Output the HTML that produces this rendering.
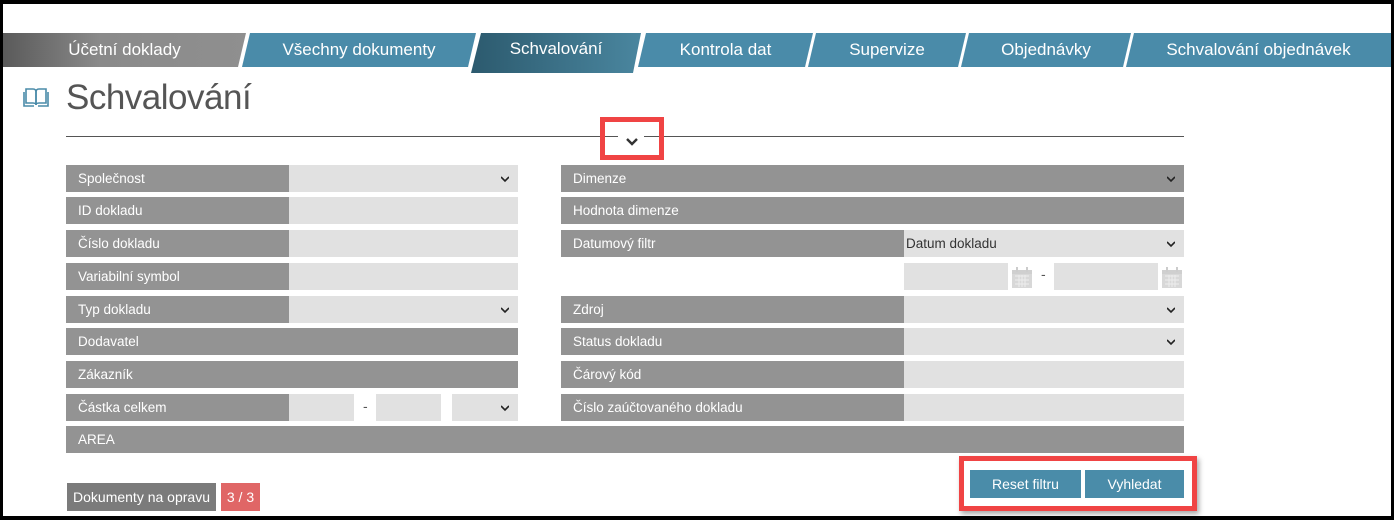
<!DOCTYPE html>
<html><head><meta charset="utf-8"><style>
*{margin:0;padding:0;box-sizing:border-box}
html,body{width:1394px;height:520px;overflow:hidden;background:#000}
#pg{position:absolute;left:3px;top:4px;width:1388px;height:512px;background:#fff}
.a{position:absolute}
body{font-family:"Liberation Sans",sans-serif}
.tab{position:absolute;top:33px;height:34px;color:#fff;font-size:17px;line-height:34px;text-align:center;background:#4a8ba9;box-shadow:0 2px 3px rgba(0,0,0,.2)}
.l{position:absolute;height:27px;background:#939393;color:#fff;font-size:13.5px;line-height:27px;padding-left:12px}
.i{position:absolute;height:27px;background:#e1e1e1;font-size:13.5px;line-height:27px;padding-left:2px;color:#333}
.ch{position:absolute;right:9px;top:10px;width:8px;height:8px}
.cal{position:absolute;width:20px;height:22px}
</style></head><body>
<div id="pg"></div>
<div class="tab" style="left:3px;width:243px;background:linear-gradient(90deg,#5a5a5a,#8a8a8a 40%,#8f8f8f);clip-path:polygon(0 0,100% 0,calc(100% - 8px) 100%,0 100%);color:#fff">Účetní doklady</div>
<div class="tab" style="left:242px;width:234px;clip-path:polygon(8px 0,100% 0,calc(100% - 8px) 100%,0 100%)">Všechny dokumenty</div>
<div class="tab" style="left:471px;width:170px;height:40px;line-height:32px;background:linear-gradient(90deg,#2c5a6e,#4a869f);clip-path:polygon(10px 0,100% 0,calc(100% - 8px) 100%,0 100%)">Schvalování</div>
<div class="tab" style="left:638px;width:175px;clip-path:polygon(8px 0,100% 0,calc(100% - 8px) 100%,0 100%)">Kontrola dat</div>
<div class="tab" style="left:808px;width:158px;clip-path:polygon(8px 0,100% 0,calc(100% - 8px) 100%,0 100%)">Supervize</div>
<div class="tab" style="left:961px;width:170px;clip-path:polygon(8px 0,100% 0,calc(100% - 8px) 100%,0 100%)">Objednávky</div>
<div class="tab" style="left:1126px;width:265px;clip-path:polygon(8px 0,100% 0,100% 100%,0 100%)">Schvalování objednávek</div>

<svg class="a" style="left:23px;top:86px" width="26" height="22" viewBox="0 0 26 22"><g fill="none" stroke="#4a8ba9" stroke-width="1.6"><path d="M3 3h7c2 0 3 1 3 3v13c0-1-1-2-3-2H3z"/><path d="M23 3h-7c-2 0-3 1-3 3v13c0-1 1-2 3-2h7z"/><path d="M1 6v14h10M25 6v14H15"/></g></svg>
<div class="a" style="left:66px;top:78px;font-size:35px;color:#555;font-weight:300;letter-spacing:-0.5px">Schvalování</div>
<div class="a" style="left:66px;top:136px;width:1118px;height:1px;background:#555"></div>
<div class="a" style="left:618px;top:132px;width:26px;height:14px;background:#fff"></div>
<svg class="a" style="left:626px;top:138px" width="12" height="8"><path d="M1 1l5 5 5-5" fill="none" stroke="#333" stroke-width="2.4"/></svg>
<div class="a" style="left:600px;top:117px;width:64px;height:43px;border:5px solid #f04444"></div>

<!-- left column -->
<div class="l" style="left:66px;top:165px;width:223px">Společnost</div><div class="i" style="left:289px;top:165px;width:229px"><svg class="ch" viewBox="0 0 8 8"><path d="M0 2l4 4 4-4" fill="none" stroke="#222" stroke-width="1.6"/></svg></div>
<div class="l" style="left:66px;top:197px;width:223px">ID dokladu</div><div class="i" style="left:289px;top:197px;width:229px"></div>
<div class="l" style="left:66px;top:230px;width:223px">Číslo dokladu</div><div class="i" style="left:289px;top:230px;width:229px"></div>
<div class="l" style="left:66px;top:263px;width:223px">Variabilní symbol</div><div class="i" style="left:289px;top:263px;width:229px"></div>
<div class="l" style="left:66px;top:296px;width:223px">Typ dokladu</div><div class="i" style="left:289px;top:296px;width:229px"><svg class="ch" viewBox="0 0 8 8"><path d="M0 2l4 4 4-4" fill="none" stroke="#222" stroke-width="1.6"/></svg></div>
<div class="l" style="left:66px;top:328px;width:452px">Dodavatel</div>
<div class="l" style="left:66px;top:361px;width:452px">Zákazník</div>
<div class="l" style="left:66px;top:394px;width:223px">Částka celkem</div>
<div class="i" style="left:289px;top:394px;width:65px"></div>
<div class="a" style="left:363px;top:398px;font-size:14px;color:#555">-</div>
<div class="i" style="left:376px;top:394px;width:65px"></div>
<div class="i" style="left:452px;top:394px;width:66px"><svg class="ch" viewBox="0 0 8 8"><path d="M0 2l4 4 4-4" fill="none" stroke="#222" stroke-width="1.6"/></svg></div>
<div class="l" style="left:66px;top:426px;width:1118px">AREA</div>

<!-- right column -->
<div class="l" style="left:561px;top:165px;width:623px">Dimenze<svg class="ch" viewBox="0 0 8 8"><path d="M0 2l4 4 4-4" fill="none" stroke="#222" stroke-width="1.6"/></svg></div>
<div class="l" style="left:561px;top:197px;width:623px">Hodnota dimenze</div>
<div class="l" style="left:561px;top:230px;width:343px">Datumový filtr</div><div class="i" style="left:904px;top:230px;width:280px">Datum dokladu<svg class="ch" viewBox="0 0 8 8"><path d="M0 2l4 4 4-4" fill="none" stroke="#222" stroke-width="1.6"/></svg></div>
<div class="i" style="left:904px;top:263px;width:104px"></div>
<svg class="cal" style="left:1012px;top:266px" viewBox="0 0 20 22"><rect x="0" y="4" width="20" height="18" fill="#d8d8d8"/><rect x="0" y="4" width="20" height="4" fill="#cfcfcf"/><rect x="4" y="1" width="2" height="5" fill="#ccc"/><rect x="14" y="1" width="2" height="5" fill="#ccc"/><path d="M3 10h14M3 14h14M3 18h14M7 9v12M10 9v12M13 9v12" stroke="#eee" stroke-width="1"/></svg>
<div class="a" style="left:1041px;top:266px;font-size:14px;color:#555">-</div>
<div class="i" style="left:1054px;top:263px;width:104px"></div>
<svg class="cal" style="left:1162px;top:266px" viewBox="0 0 20 22"><rect x="0" y="4" width="20" height="18" fill="#d8d8d8"/><rect x="0" y="4" width="20" height="4" fill="#cfcfcf"/><rect x="4" y="1" width="2" height="5" fill="#ccc"/><rect x="14" y="1" width="2" height="5" fill="#ccc"/><path d="M3 10h14M3 14h14M3 18h14M7 9v12M10 9v12M13 9v12" stroke="#eee" stroke-width="1"/></svg>
<div class="l" style="left:561px;top:296px;width:343px">Zdroj</div><div class="i" style="left:904px;top:296px;width:280px"><svg class="ch" viewBox="0 0 8 8"><path d="M0 2l4 4 4-4" fill="none" stroke="#222" stroke-width="1.6"/></svg></div>
<div class="l" style="left:561px;top:328px;width:343px">Status dokladu</div><div class="i" style="left:904px;top:328px;width:280px"><svg class="ch" viewBox="0 0 8 8"><path d="M0 2l4 4 4-4" fill="none" stroke="#222" stroke-width="1.6"/></svg></div>
<div class="l" style="left:561px;top:361px;width:343px">Čárový kód</div><div class="i" style="left:904px;top:361px;width:280px"></div>
<div class="l" style="left:561px;top:394px;width:343px">Číslo zaúčtovaného dokladu</div><div class="i" style="left:904px;top:394px;width:280px"></div>

<!-- bottom -->
<div class="a" style="left:67px;top:483px;width:149px;height:28px;background:#7b7b7b;color:#fff;font-size:14px;line-height:28px;text-align:center">Dokumenty na opravu</div>
<div class="a" style="left:221px;top:483px;width:39px;height:28px;background:#e06666;color:#fff;font-size:14px;line-height:28px;text-align:center">3 / 3</div>
<div class="a" style="left:959px;top:456px;width:238px;height:55px;border:5px solid #f04444;box-shadow:2px 3px 5px rgba(0,0,0,.35)"></div>
<div class="a" style="left:970px;top:470px;width:111px;height:28px;background:#4a8ca9;color:#fff;font-size:14px;line-height:28px;text-align:center">Reset filtru</div>
<div class="a" style="left:1085px;top:470px;width:99px;height:28px;background:#4a8ca9;color:#fff;font-size:14px;line-height:28px;text-align:center">Vyhledat</div>
</body></html>
